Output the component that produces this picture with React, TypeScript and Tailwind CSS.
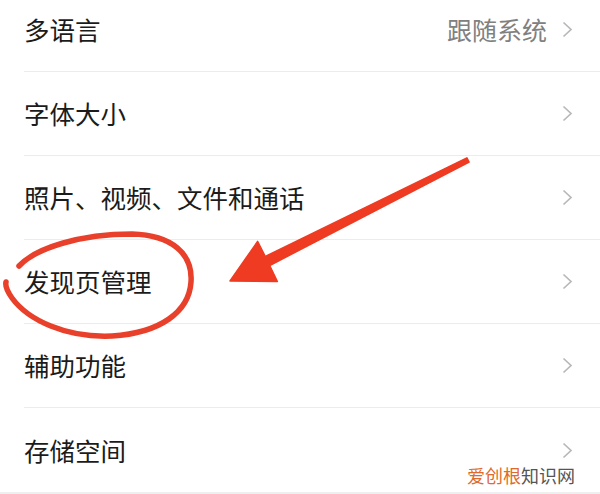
import type { ReactElement } from "react";

type Row = { label: string; value?: string };

const ROWS: Row[] = [
  { label: "多语言", value: "跟随系统" },
  { label: "字体大小" },
  { label: "照片、视频、文件和通话" },
  { label: "发现页管理" },
  { label: "辅助功能" },
  { label: "存储空间" },
];

export default function App(): ReactElement {
  return (
    <div
      className="relative w-[600px] h-[494px] overflow-hidden bg-white flex flex-col"
      style={{ fontFamily: '"Noto Sans CJK SC", "Noto Sans", sans-serif' }}
    >
      <div className="-mt-[12px] flex flex-col">
        {ROWS.map((r, i) => (
          <SettingRow key={r.label} row={r} last={i === ROWS.length - 1} />
        ))}
      </div>
      <div className="mt-auto h-[4px] bg-[#efefef]" />

      {/* 水印 */}
      <div className="absolute right-[25px] bottom-[10px] text-[18px] leading-none">
        <span className="text-[#e06a2c]">爱创根</span>
        <span className="text-[#555555]">知识网</span>
      </div>

      <Annotation />
    </div>
  );
}

function SettingRow({ row, last }: { row: Row; last: boolean }): ReactElement {
  return (
    <div className="pl-[24px]">
      <div
        className={`h-[84px] flex items-center pr-[27px] ${last ? "" : "border-b border-[#ececec]"}`}
      >
        <span className="flex-1 text-[25.5px] text-[#1b1b1b]">{row.label}</span>
        {row.value && <span className="text-[25px] text-[#808080] mr-[15px]">{row.value}</span>}
        <svg width="11" height="17" viewBox="0 0 11 17">
          <polyline points="1.5,1.5 9,8.5 1.5,15.5" fill="none" stroke="#b8b8b8" strokeWidth="1.7" />
        </svg>
      </div>
    </div>
  );
}

// 红色箭头和手绘圈
function Annotation(): ReactElement {
  return (
    <svg className="absolute inset-0 pointer-events-none" width="600" height="494" viewBox="0 0 600 494">
      <polygon
        points="466.9,157.8 265.3,256.5 257.6,241.4 230,281 277.4,281.6 269.7,265.5 469.1,162.2"
        fill="#ef3b22"
        stroke="#ef3b22"
        strokeWidth="1.5"
        strokeLinejoin="round"
      />
      <path
        d="M 19 266 C 36 248, 80 234, 132 234 C 172 235, 193 254, 191 282 C 189 312, 160 333, 112 336 C 66 338, 28 320, 12 298 C 7 291, 5 286, 6 282"
        fill="none"
        stroke="#e8402a"
        strokeWidth="5.5"
        strokeLinecap="round"
      />
    </svg>
  );
}
